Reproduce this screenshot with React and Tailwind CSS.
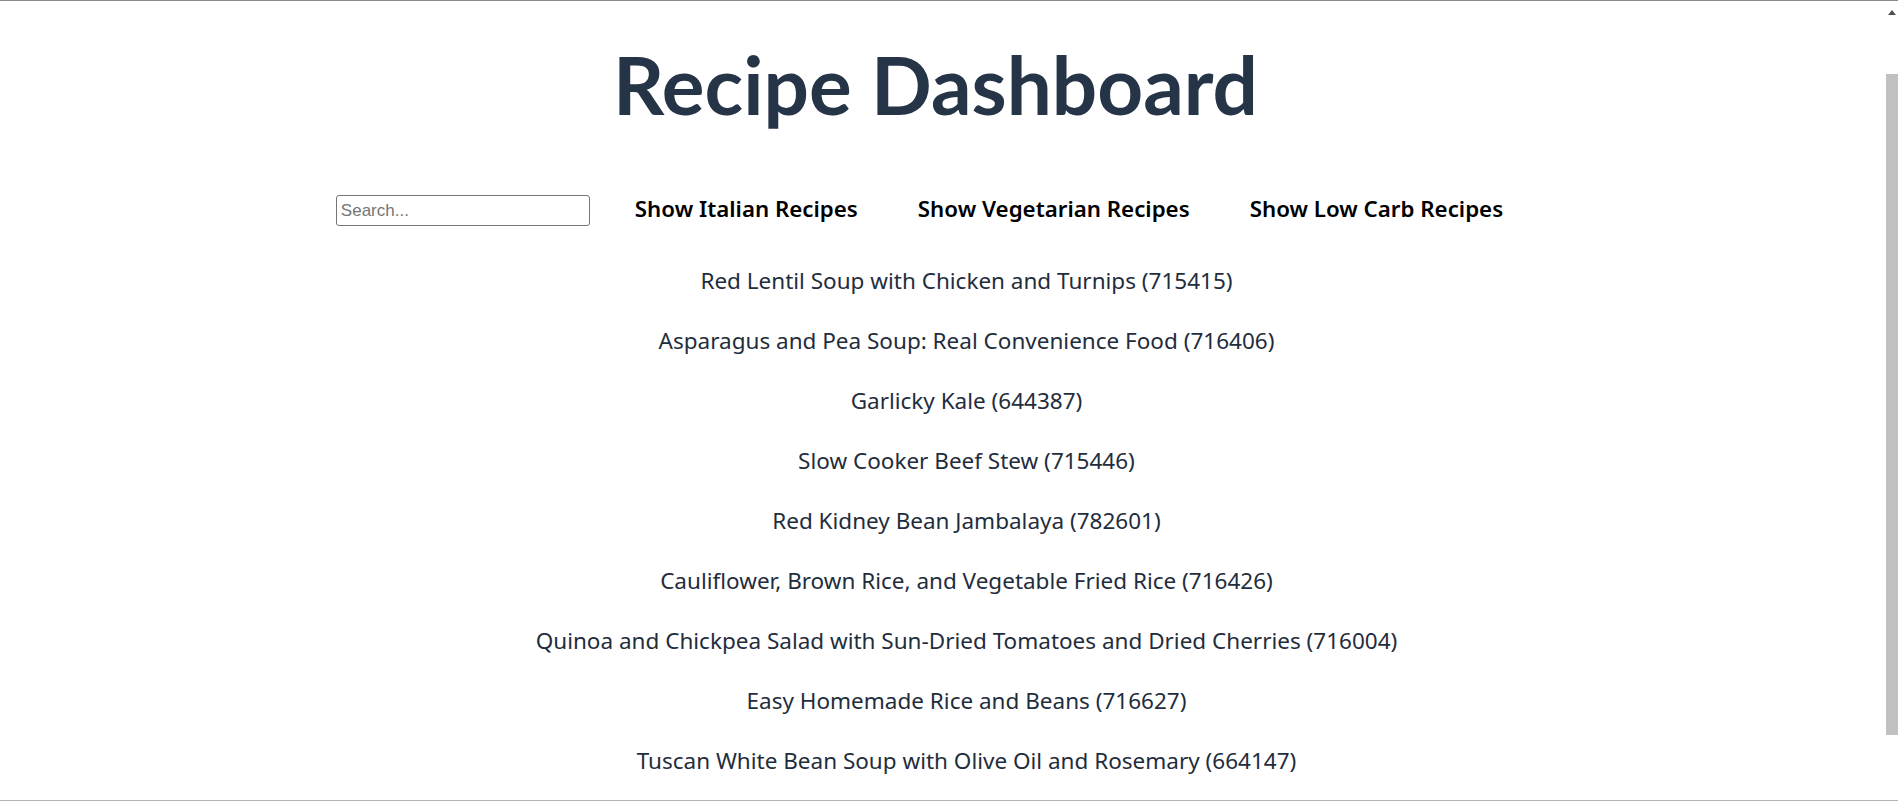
import { useState } from 'react'

const RECIPES = [
  { id: 715415, title: 'Red Lentil Soup with Chicken and Turnips' },
  { id: 716406, title: 'Asparagus and Pea Soup: Real Convenience Food' },
  { id: 644387, title: 'Garlicky Kale' },
  { id: 715446, title: 'Slow Cooker Beef Stew' },
  { id: 782601, title: 'Red Kidney Bean Jambalaya' },
  { id: 716426, title: 'Cauliflower, Brown Rice, and Vegetable Fried Rice' },
  { id: 716004, title: 'Quinoa and Chickpea Salad with Sun-Dried Tomatoes and Dried Cherries' },
  { id: 716627, title: 'Easy Homemade Rice and Beans' },
  { id: 664147, title: 'Tuscan White Bean Soup with Olive Oil and Rosemary' },
]

const FILTERS = ['Show Italian Recipes', 'Show Vegetarian Recipes', 'Show Low Carb Recipes']

export default function App() {
  const [query, setQuery] = useState('')

  const shown = RECIPES.filter((r) => r.title.toLowerCase().includes(query.trim().toLowerCase()))

  return (
    <div className="flex h-[801px] overflow-hidden border-y border-t-[#8a8a8a] border-b-[#b4b4b4] bg-white font-['Noto_Sans',sans-serif]">
      <main className="flex-1">
        <h1 className="mt-[35px] pr-[12px] text-center font-['Lato',sans-serif] text-[80px] font-bold leading-[96px] text-[#253447]">
          Recipe Dashboard
        </h1>

        <div className="mt-[63px] flex items-center justify-center pr-[44px]">
          <input
            value={query}
            onChange={(e) => setQuery(e.target.value)}
            placeholder="Search..."
            className="h-[31px] w-[254px] rounded-[3px] border border-[#767676] px-[4px] font-['Liberation_Sans',sans-serif] text-[17px] text-black placeholder:text-[#757575]"
          />
          <div className="ml-[45px] flex gap-[60px] pb-[4px]">
            {FILTERS.map((f) => (
              <button key={f} className="text-[22.3px] font-semibold leading-[26px] text-black">
                {f}
              </button>
            ))}
          </div>
        </div>

        <ul className="mt-[40px] pl-[50px] text-center text-[22.5px] text-[#1f2d3d]">
          {shown.map((r) => (
            <li key={r.id} className="h-[60px] leading-[30px]">
              {r.title} ({r.id})
            </li>
          ))}
        </ul>
      </main>

      <div className="flex w-[15px] flex-col items-end">
        <div className="mr-[2px] mt-[9px] h-0 w-0 border-x-[4px] border-b-[5px] border-x-transparent border-b-[#505050]" />
        <div className="mt-[59px] h-[661px] w-[12px] bg-[#c1c1c1]" />
      </div>
    </div>
  )
}
